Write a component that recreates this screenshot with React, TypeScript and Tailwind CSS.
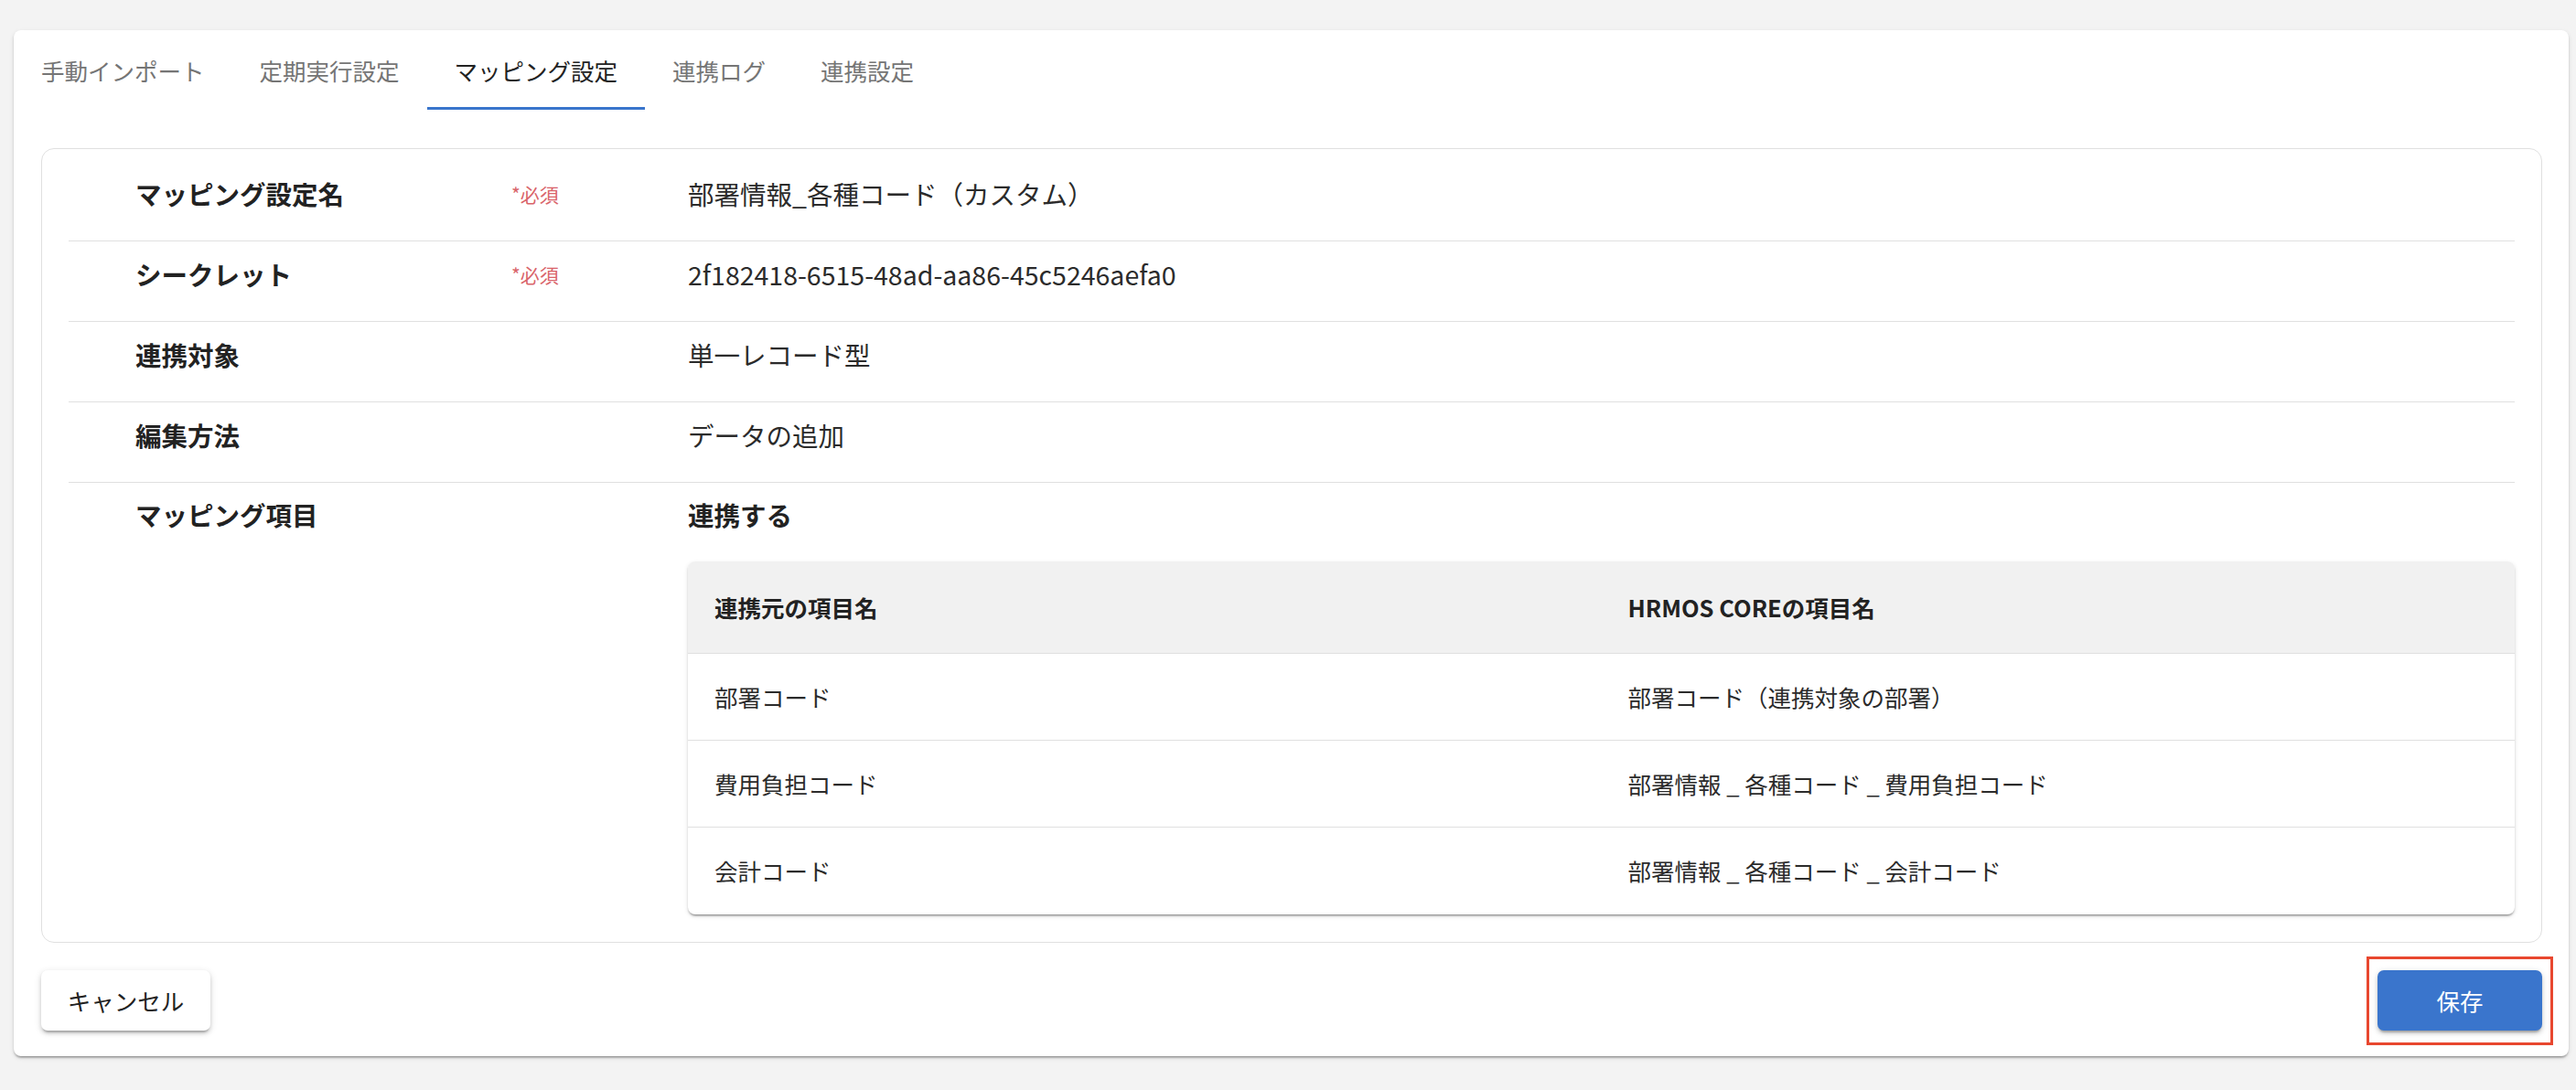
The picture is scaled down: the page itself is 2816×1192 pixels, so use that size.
import React from "react";

const font = {
  fontFamily: '"Noto Sans CJK JP", "Noto Sans", Roboto, sans-serif',
};

const tabs = ["手動インポート", "定期実行設定", "マッピング設定", "連携ログ", "連携設定"];

type Row = { label: string; required?: boolean; value: string };

const rows: Row[] = [
  { label: "マッピング設定名", required: true, value: "部署情報_各種コード（カスタム）" },
  { label: "シークレット", required: true, value: "2f182418-6515-48ad-aa86-45c5246aefa0" },
  { label: "連携対象", value: "単一レコード型" },
  { label: "編集方法", value: "データの追加" },
];

const mappings = [
  ["部署コード", "部署コード（連携対象の部署）"],
  ["費用負担コード", "部署情報 _ 各種コード _ 費用負担コード"],
  ["会計コード", "部署情報 _ 各種コード _ 会計コード"],
];

function FieldRow({ row }: { row: Row }) {
  return (
    <div className="flex border-b border-[#e0e0e0] pl-[73px] pt-[22px] pb-[37px]">
      <div className="w-[411px] text-[28.5px] leading-[28px] font-bold text-[#222]">{row.label}</div>
      <div className="w-[193px] text-[21px] leading-[28px] text-[#d9646a]">
        {row.required ? "*必須" : ""}
      </div>
      <div className="flex-1 text-[28.5px] leading-[28px] text-[#2b2b2b]">{row.value}</div>
    </div>
  );
}

export default function App() {
  return (
    <div className="min-h-[1192px] bg-[#f3f3f3] pt-[33px] pl-[15px] pr-[8px] pb-[40px]" style={font}>
      <div className="rounded-[8px] bg-white shadow-[0_3px_2px_-2px_rgba(0,0,0,0.25),0_2px_2px_0_rgba(0,0,0,0.14),0_2px_5px_0_rgba(0,0,0,0.12)]">
        {/* tab bar */}
        <div className="flex h-[87px]">
          {tabs.map((t, i) => {
            const active = i === 2;
            return (
              <div
                key={t}
                className={
                  "relative flex items-center px-[30px] text-[25.5px] leading-[36px] " +
                  (active ? "text-[#222]" : "text-[#757575]")
                }
              >
                {t}
                {active && (
                  <div className="absolute left-0 right-0 bottom-0 h-[3px] bg-[#3a75cc]" />
                )}
              </div>
            );
          })}
        </div>

        <div className="pl-[30px] pr-[29px] pt-[42px] pb-[28px]">
          {/* settings box */}
          <div className="rounded-[14px] border border-[#e0e0e0] px-[29px] pt-[13px] pb-[30px]">
            {rows.map((r) => (
              <FieldRow key={r.label} row={r} />
            ))}
            <div className="flex pl-[73px] pt-[21px]">
              <div className="w-[411px] text-[28.5px] leading-[28px] font-bold text-[#222]">マッピング項目</div>
              <div className="w-[193px]" />
              <div className="flex-1">
                <div className="text-[28.5px] leading-[28px] font-bold text-[#222]">連携する</div>
                <div className="mt-[37px] overflow-hidden rounded-[8px] bg-white shadow-[0_3px_2px_-2px_rgba(0,0,0,0.3),0_2px_2px_0_rgba(0,0,0,0.14),0_2px_5px_0_rgba(0,0,0,0.12)]">
                  <div className="grid h-[101px] grid-cols-2 items-center border-b border-[#e0e0e0] bg-[#f1f1f1] text-[25.5px] font-bold text-[#222]">
                    <div className="px-[29px]">連携元の項目名</div>
                    <div className="px-[29px]">HRMOS COREの項目名</div>
                  </div>
                  {mappings.map((m, i) => (
                    <div
                      key={m[0]}
                      className={
                        "grid h-[95px] grid-cols-2 items-center text-[25.5px] text-[#2b2b2b] " +
                        (i < mappings.length - 1 ? "border-b border-[#e0e0e0]" : "")
                      }
                    >
                      <div className="px-[29px]">{m[0]}</div>
                      <div className="px-[29px]">{m[1]}</div>
                    </div>
                  ))}
                </div>
              </div>
            </div>
          </div>

          {/* actions */}
          <div className="mt-[30px] flex items-center justify-between">
            <button className="flex h-[66px] w-[185px] items-center justify-center rounded-[7px] bg-white text-[25.5px] text-[#222] shadow-[0_4px_2px_-2px_rgba(0,0,0,0.2),0_3px_4px_0_rgba(0,0,0,0.14),0_2px_9px_0_rgba(0,0,0,0.12)]">
              キャンセル
            </button>
            <div className="relative">
              <button className="flex h-[66px] w-[180px] items-center justify-center rounded-[7px] bg-[#3a75cc] text-[25.5px] text-white shadow-[0_4px_2px_-2px_rgba(0,0,0,0.2),0_3px_4px_0_rgba(0,0,0,0.14),0_2px_9px_0_rgba(0,0,0,0.12)]">
                保存
              </button>
              <div className="pointer-events-none absolute left-[-12px] right-[-12px] top-[-15px] bottom-[-16px] border-[3px] border-[#e8472f]" />
            </div>
          </div>
        </div>
      </div>
    </div>
  );
}
